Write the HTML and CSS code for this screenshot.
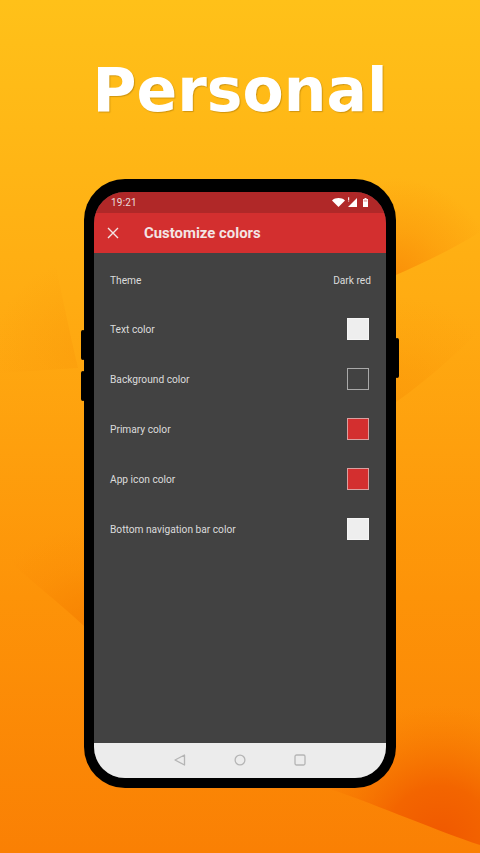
FILE: index.html
```html
<!DOCTYPE html>
<html lang="en">
<head>
<meta charset="utf-8">
<title>Personal</title>
<link rel="stylesheet" href="styles.css">
</head>
<body>
<svg class="backdrop" viewBox="0 0 480 853" preserveAspectRatio="none" aria-hidden="true">
  <defs>
    <linearGradient id="bg" x1="0" y1="0" x2="0" y2="1">
      <stop offset="0" stop-color="#ffc119"/>
      <stop offset="0.35" stop-color="#ffac12"/>
      <stop offset="0.7" stop-color="#fd9308"/>
      <stop offset="1" stop-color="#fa8004"/>
    </linearGradient>
    <radialGradient id="corner" gradientUnits="userSpaceOnUse" cx="440" cy="840" r="135">
      <stop offset="0" stop-color="#f05800"/>
      <stop offset="0.4" stop-color="#f36500"/>
      <stop offset="1" stop-color="#f67a00" stop-opacity="0"/>
    </radialGradient>
    <radialGradient id="rightTop" gradientUnits="userSpaceOnUse" cx="396" cy="278" r="100">
      <stop offset="0" stop-color="#f98b06" stop-opacity=".85"/>
      <stop offset="0.5" stop-color="#f98b06" stop-opacity=".35"/>
      <stop offset="1" stop-color="#f98b06" stop-opacity="0"/>
    </radialGradient>
    <radialGradient id="rightMid" gradientUnits="userSpaceOnUse" cx="396" cy="405" r="110">
      <stop offset="0" stop-color="#f99406" stop-opacity=".55"/>
      <stop offset="0.6" stop-color="#f99406" stop-opacity=".15"/>
      <stop offset="1" stop-color="#f99406" stop-opacity="0"/>
    </radialGradient>
    <radialGradient id="leftLow" gradientUnits="userSpaceOnUse" cx="88" cy="632" r="105">
      <stop offset="0" stop-color="#f58000" stop-opacity=".85"/>
      <stop offset="0.6" stop-color="#f58000" stop-opacity=".2"/>
      <stop offset="1" stop-color="#f58000" stop-opacity="0"/>
    </radialGradient>
    <radialGradient id="leftHigh" gradientUnits="userSpaceOnUse" cx="84" cy="350" r="90">
      <stop offset="0" stop-color="#f9980a" stop-opacity=".45"/>
      <stop offset="1" stop-color="#f9980a" stop-opacity="0"/>
    </radialGradient>
  </defs>
  <rect width="480" height="853" fill="url(#bg)"/>
  <path d="M360 290 L396 275 C425 262 455 248 480 232 V120 H360Z" fill="url(#rightTop)"/>
  <path d="M360 430 L396 402 C425 382 455 355 480 330 V240 H360Z" fill="url(#rightMid)"/>
  <path d="M0 553 C30 580 58 602 84 626 L120 660 V500 H0Z" fill="url(#leftLow)"/>
  <path d="M25 120 C45 210 62 300 78 368 L0 373 V260Z" fill="url(#leftHigh)"/>
  <path d="M330 789 C380 806 440 832 480 845 V680 H330Z" fill="url(#corner)"/>
</svg>

<main class="page">
  <h1 class="headline">Personal</h1>

  <div class="phone">
    <span class="side-btn side-left-a"></span>
    <span class="side-btn side-left-b"></span>
    <span class="side-btn side-right"></span>

    <div class="screen">
      <div class="status-bar">
        <span class="clock">19:21</span>
        <span class="status-icons">
          <svg width="13" height="9" viewBox="0 0 13 9"><path d="M0 2.400C1.800 .9 4 .1 6.500 .1S11.200 .9 13 2.400L6.500 9Z" fill="#fff"/></svg>
          <svg class="signal" width="10" height="10" viewBox="0 0 10 10"><path d="M10 1V10H1Z" fill="#fff"/><path d="M1 .2h1.200v2.800H1zM1 3.600h1.200v1H1z" fill="#fff" opacity=".85"/></svg>
          <svg class="battery" width="5" height="9" viewBox="0 0 5 9"><path d="M1.500 0h2v1H5v8H0V1h1.500z" fill="#fff"/><path d="M.7 1.700h3.600v2H.7z" fill="#e6b3b3"/></svg>
        </span>
      </div>

      <header class="app-bar">
        <svg class="close-icon" width="12" height="12" viewBox="0 0 12 12"><path d="M1 1L11 11M11 1L1 11" stroke="#f3e6e6" stroke-width="1.400" fill="none"/></svg>
        <span class="app-title">Customize colors</span>
      </header>

      <section class="settings">
        <div class="row row-theme"><span>Theme</span><span>Dark red</span></div>
        <div class="row"><span>Text color</span><span class="swatch swatch-light"></span></div>
        <div class="row"><span>Background color</span><span class="swatch swatch-dark"></span></div>
        <div class="row"><span>Primary color</span><span class="swatch swatch-red"></span></div>
        <div class="row"><span>App icon color</span><span class="swatch swatch-red"></span></div>
        <div class="row"><span>Bottom navigation bar color</span><span class="swatch swatch-light"></span></div>
      </section>

      <nav class="nav-bar">
        <svg width="12" height="12" viewBox="0 0 12 12"><path d="M10.500 1V11L1 6Z" fill="none" stroke="#b5b5b5" stroke-width="1.300" stroke-linejoin="round"/></svg>
        <svg width="12" height="12" viewBox="0 0 12 12"><circle cx="6" cy="6" r="4.900" fill="none" stroke="#b5b5b5" stroke-width="1.300"/></svg>
        <svg width="12" height="12" viewBox="0 0 12 12"><rect x="1" y="1" width="10" height="10" rx="1.500" fill="none" stroke="#b5b5b5" stroke-width="1.300"/></svg>
      </nav>
    </div>
  </div>
</main>
</body>
</html>
```
FILE: styles.css
```css
html, body {
  margin: 0;
  height: 853px;
  overflow: hidden;
}
body {
  position: relative;
  width: 480px;
  font-family: Roboto, "Open Sans", "Liberation Sans", sans-serif;
}
.backdrop {
  position: absolute;
  inset: 0;
  width: 480px;
  height: 853px;
}
.page {
  position: relative;
  display: flex;
  flex-direction: column;
  align-items: center;
  height: 853px;
}
.headline {
  margin: 52px 0 0;
  height: 126.500px;
  font-family: "DejaVu Sans", sans-serif;
  font-weight: 700;
  font-size: 60px;
  line-height: 76px;
  color: #fff;
  text-shadow: 1px 1px 1px rgba(170, 120, 10, .55);
}
.phone {
  position: relative;
  width: 292px;
  height: 586px;
  padding: 13px 10px 10.500px;
  background: #000;
  border-radius: 41px;
}
.side-btn {
  position: absolute;
  width: 4px;
  background: #000;
  border-radius: 2px;
}
.side-left-a { left: -3px; top: 151px; height: 30px; }
.side-left-b { left: -3px; top: 192px; height: 30px; }
.side-right { right: -3px; top: 159px; height: 40px; }
.screen {
  display: flex;
  flex-direction: column;
  height: 100%;
  overflow: hidden;
  border-radius: 31px;
  background: #424242;
}
.status-bar {
  display: flex;
  flex: none;
  align-items: center;
  justify-content: space-between;
  height: 21px;
  padding: 0 18px 0 17px;
  background: #b02828;
}
.clock {
  font-size: 10px;
  letter-spacing: .2px;
  color: #eadcdc;
}
.status-icons {
  display: flex;
  align-items: center;
  gap: 2px;
}
.battery { margin-left: 4px; }
.app-bar {
  display: flex;
  flex: none;
  align-items: center;
  height: 40.500px;
  padding-left: 13px;
  background: #d32f2f;
}
.app-title {
  margin-left: 25px;
  font-size: 14.900px;
  font-weight: 700;
  color: #f3e4e4;
}
.settings {
  flex: 1;
  display: flex;
  flex-direction: column;
}
.row {
  display: flex;
  flex: none;
  align-items: center;
  justify-content: space-between;
  height: 50px;
  padding: 0 17px 0 16px;
  font-size: 10.200px;
  color: #dcdcdc;
}
.row-theme {
  height: 54px;
  padding-right: 15px;
  margin-bottom: -3px;
}
.swatch {
  box-sizing: border-box;
  width: 22px;
  height: 22px;
  border: 1px solid #a9a9a9;
}
.swatch-light { background: #eeeeee; border-color: #f5f5f5; }
.swatch-dark { background: #424242; }
.swatch-red { background: #d32f2f; border-color: #d9a0a0; }
.nav-bar {
  display: flex;
  flex: none;
  align-items: center;
  justify-content: center;
  gap: 48px;
  height: 34.500px;
  background: #ececec;
}
```
